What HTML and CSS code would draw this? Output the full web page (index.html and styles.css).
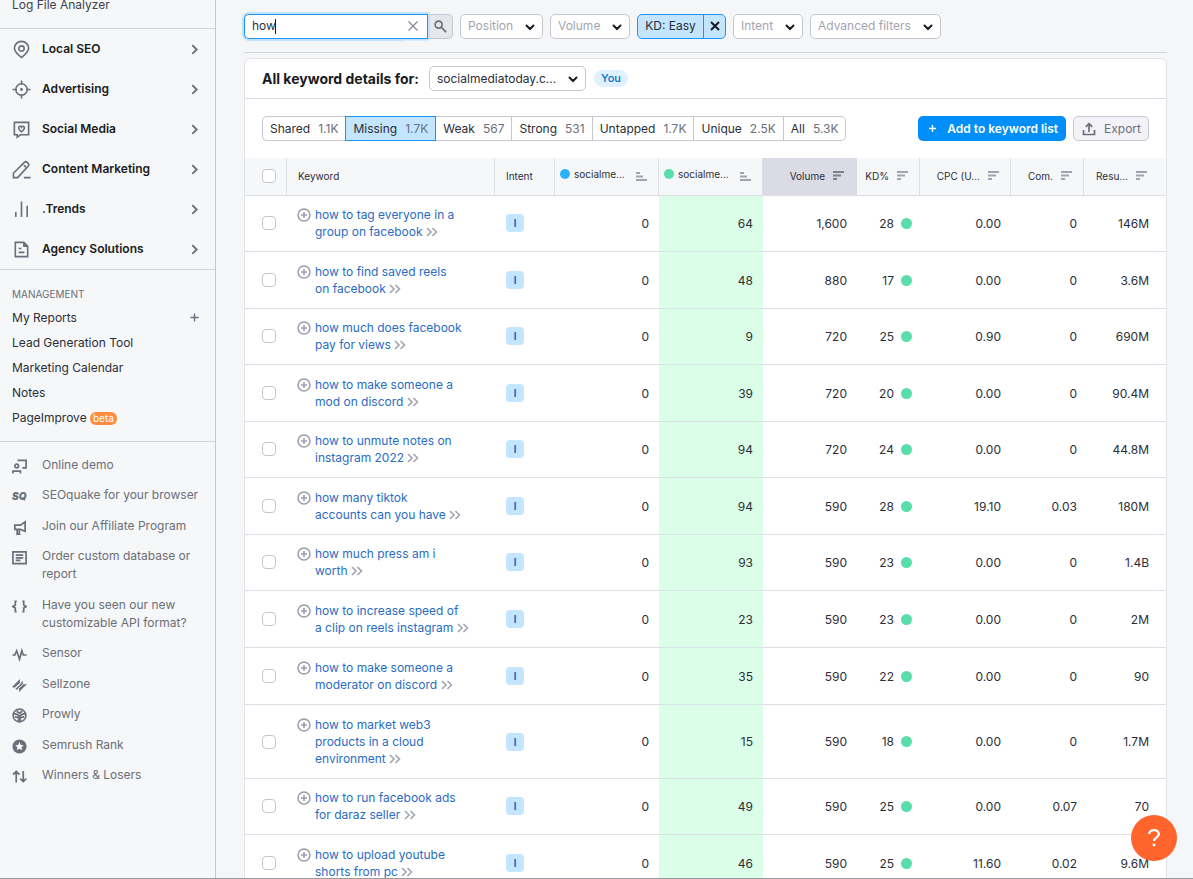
FILE: index.html
```html
<!DOCTYPE html>
<html lang="en">
<head>
<meta charset="utf-8">
<title>Keyword Gap</title>
<link rel="stylesheet" href="styles.css">
</head>
<body>
<svg class="sprite" aria-hidden="true">
  <symbol id="right" viewBox="0 0 8 10"><path d="M2 1l4 4-4 4" fill="none" stroke="currentColor" stroke-width="1.7"/></symbol>
  <symbol id="down" viewBox="0 0 10 7"><path d="M1.500 1.500L5 5l3.500-3.500" fill="none" stroke="currentColor" stroke-width="2" stroke-linecap="round"/></symbol>
  <symbol id="add" viewBox="0 0 14 14"><circle cx="7" cy="7" r="6" fill="none" stroke="currentColor" stroke-width="1.500"/><path d="M7 4v6M4 7h6" stroke="currentColor" stroke-width="1.600"/></symbol>
  <symbol id="more" viewBox="0 0 12 10"><path d="M1 1l4 4-4 4M6.500 1l4 4-4 4" fill="none" stroke="currentColor" stroke-width="1.600"/></symbol>
  <symbol id="desc" viewBox="0 0 11 9"><path d="M0 1h11M0 4.500h8M0 8h4" stroke="currentColor" stroke-width="1.800"/></symbol>
  <symbol id="asc" viewBox="0 0 11 9"><path d="M0 1h4M0 4.500h7M0 8h11" stroke="currentColor" stroke-width="1.800"/></symbol>
</svg>
<div class="app">
<aside class="sidebar">
  <div class="previous"><a href="#">Log File Analyzer</a></div>
  <nav class="sections">
    <a href="#"><svg viewBox="0 0 20 20"><path d="M10 18.500C5.500 15 2.500 12 2.500 8.500a7.500 7 0 0 1 15 0C17.500 12 14.500 15 10 18.500z"/><circle cx="10" cy="9" r="2.800"/></svg><span>Local SEO</span><svg class="arrow"><use href="#right"/></svg></a>
    <a href="#"><svg viewBox="0 0 20 20"><circle cx="10" cy="10" r="6"/><path d="M10 .5V5M10 15v4.500M.5 10H5M15 10h4.500"/><circle class="solid" cx="10" cy="10" r="1.500"/></svg><span>Advertising</span><svg class="arrow"><use href="#right"/></svg></a>
    <a href="#"><svg viewBox="0 0 20 20"><path d="M2.500 2.500h15v13H9L5.500 18v-2.500h-3z"/><path d="M10 12.500C8 11 7 9.700 7 8.300c0-2 2.300-2.300 3-.8.7-1.500 3-1.200 3 .8 0 1.400-1 2.700-3 4.200z"/></svg><span>Social Media</span><svg class="arrow"><use href="#right"/></svg></a>
    <a href="#"><svg viewBox="0 0 20 20"><path d="M1.500 18.500V14L13 2.500q1.500-1.500 3 0l1 1q1.500 1.500 0 3L6 18.500zM12.500 5.500l2 2M12.500 18.500h7"/></svg><span>Content Marketing</span><svg class="arrow"><use href="#right"/></svg></a>
    <a href="#"><svg viewBox="0 0 20 20"><path d="M4 12.500V18M10 1.500V18M16 6v12"/></svg><span>.Trends</span><svg class="arrow"><use href="#right"/></svg></a>
    <a href="#"><svg viewBox="0 0 20 20"><path d="M3.500 2.500h9l4 4v11h-13zM12.500 2.500v4h4M7 9h3M7 13h6"/></svg><span>Agency Solutions</span><svg class="arrow"><use href="#right"/></svg></a>
  </nav>
  <nav class="management">
    <h2>MANAGEMENT</h2>
    <div class="reports"><a href="#">My Reports</a><button type="button" aria-label="Add report"><svg viewBox="0 0 10 10"><path d="M5 .5v9M.5 5h9"/></svg></button></div>
    <a href="#">Lead Generation Tool</a>
    <a href="#">Marketing Calendar</a>
    <a href="#">Notes</a>
    <a href="#">PageImprove <span class="beta">beta</span></a>
  </nav>
  <nav class="links">
    <a href="#"><svg viewBox="0 0 16 16"><path d="M6 1.500h9v8h-4"/><circle cx="5" cy="7.500" r="2"/><path d="M1 15.500V13h8v2.500"/></svg><span>Online demo</span></a>
    <a href="#"><b class="sq">SQ</b><span>SEOquake for your browser</span></a>
    <a href="#"><svg viewBox="0 0 16 16"><path d="M14 2v10L9 10H3V5.500h6zM5.500 10v5H8l-.5-5"/></svg><span>Join our Affiliate Program</span></a>
    <a href="#"><svg viewBox="0 0 16 16"><path d="M1 2h14v12.500H1zM4 5.500h8M4 8.300h8M4 11h5"/></svg><span>Order custom database or report</span></a>
    <a href="#"><svg viewBox="0 0 16 16"><path d="M5 2.500H3.500v4L1 8l2.500 1.500v4H5M11 2.500h1.500v4L15 8l-2.500 1.500v4H11"/></svg><span>Have you seen our new customizable API format?</span></a>
    <a href="#"><svg viewBox="0 0 16 16"><path d="M.5 8.500H3L5 4l3 9 2.500-9L12 8.500h3.500"/></svg><span>Sensor</span></a>
    <a href="#"><svg viewBox="0 0 16 16"><path class="solid" d="M0 9.500L8.500 1v4l-6 5.500zM3 11.500L11.500 3v4L16 6.500 7.500 15v-4l-2 1.500z"/><path class="slit" d="M3 11.500l7-6M6.500 11.500l5-4.500"/></svg><span>Sellzone</span></a>
    <a href="#"><svg viewBox="0 0 16 16"><circle cx="8" cy="8" r="6.800"/><path d="M2 6l4 1 2 2 2-2 4-1M3 9.500l3 .5 2 1.500 2-1.500 3-.5M5 3.500l3 2 3-2M6 13h4"/></svg><span>Prowly</span></a>
    <a href="#"><svg viewBox="0 0 16 16"><circle class="solid" cx="8" cy="8" r="7.500"/><path class="star" d="M8 3.300l1.400 3 3.200.4-2.400 2.200.7 3.200L8 10.500l-2.900 1.600.7-3.200-2.400-2.200 3.200-.4z"/></svg><span>Semrush Rank</span></a>
    <a href="#"><svg viewBox="0 0 16 16"><path d="M4.500 14.500v-12M1 6l3.500-3.500L8 6M12 2v11.500M8.800 10.300l3.200 3.200 3.200-3.200"/></svg><span>Winners &amp; Losers</span></a>
  </nav>
</aside>
<main>
  <form class="filters">
    <div class="search">
      <label class="field"><input type="text" value="how" aria-label="Filter by keyword"><i class="caret"></i></label>
      <button class="clear" type="reset" aria-label="Clear"><svg viewBox="0 0 10 10"><path d="M.5 .5l9 9M9.500 .5l-9 9"/></svg></button>
      <button class="submit" type="button" aria-label="Search"><svg viewBox="0 0 14 14"><circle cx="5" cy="5" r="3.800"/><path d="M8 8l5 5"/></svg></button>
    </div>
    <span class="pick"><select class="w-position" aria-label="Position"><option>Position</option></select><svg><use href="#down"/></svg></span>
    <span class="pick"><select class="w-volume" aria-label="Volume"><option>Volume</option></select><svg><use href="#down"/></svg></span>
    <div class="active-filter"><button type="button">KD: Easy</button><button type="button" aria-label="Remove KD filter"><svg viewBox="0 0 10 10"><path d="M1 1l8 8M9 1L1 9"/></svg></button></div>
    <span class="pick"><select class="w-intent" aria-label="Intent"><option>Intent</option></select><svg><use href="#down"/></svg></span>
    <span class="pick"><select class="w-advanced" aria-label="Advanced filters"><option>Advanced filters</option></select><svg><use href="#down"/></svg></span>
  </form>
  <section class="card">
    <header>
      <label for="domain">All keyword details for:</label>
      <span class="pick dark"><select id="domain" class="w-domain"><option>socialmediatoday.c...</option></select><svg><use href="#down"/></svg></span>
      <span class="you">You</span>
    </header>
    <div class="toolbar">
      <div class="tabs">
        <button type="button">Shared <span>1.1K</span></button>
        <button type="button" class="current">Missing <span>1.7K</span></button>
        <button type="button">Weak <span>567</span></button>
        <button type="button">Strong <span>531</span></button>
        <button type="button">Untapped <span>1.7K</span></button>
        <button type="button">Unique <span>2.5K</span></button>
        <button type="button">All <span>5.3K</span></button>
      </div>
      <button type="button" class="primary"><svg viewBox="0 0 10 10"><path d="M5 1v8M1 5h8"/></svg>Add to keyword list</button>
      <button type="button" class="export"><svg viewBox="0 0 14 14"><path d="M1.500 8v4.500h11V8M7 10V2M3.800 4.800L7 1.600l3.200 3.200"/></svg>Export</button>
    </div>
    <table>
      <colgroup><col class="c-check"><col><col class="c-intent"><col class="c-site"><col class="c-site"><col class="c-volume"><col class="c-kd"><col class="c-cpc"><col class="c-com"><col class="c-results"></colgroup>
      <thead><tr>
        <th><input type="checkbox" aria-label="Select all"></th>
        <th>Keyword</th>
        <th>Intent</th>
        <th class="site"><div><i class="dot blue"></i>socialme...<svg><use href="#asc"/></svg></div></th>
        <th class="site"><div><i class="dot"></i>socialme...<svg><use href="#asc"/></svg></div></th>
        <th class="sorted"><div>Volume<svg><use href="#desc"/></svg></div></th>
        <th><div>KD%<svg><use href="#desc"/></svg></div></th>
        <th><div>CPC (U...<svg><use href="#desc"/></svg></div></th>
        <th><div>Com.<svg><use href="#desc"/></svg></div></th>
        <th class="results"><div>Resu...<svg><use href="#desc"/></svg></div></th>
      </tr></thead>
      <tbody>
        <tr><td><input type="checkbox" aria-label="Select"></td><td><div class="kw"><svg><use href="#add"/></svg><a href="#">how to tag everyone in a<br>group on facebook <svg><use href="#more"/></svg></a></div></td><td><span class="intent">I</span></td><td>0</td><td>64</td><td>1,600</td><td>28<i class="dot"></i></td><td>0.00</td><td>0</td><td>146M</td></tr>
        <tr><td><input type="checkbox" aria-label="Select"></td><td><div class="kw"><svg><use href="#add"/></svg><a href="#">how to find saved reels<br>on facebook <svg><use href="#more"/></svg></a></div></td><td><span class="intent">I</span></td><td>0</td><td>48</td><td>880</td><td>17<i class="dot"></i></td><td>0.00</td><td>0</td><td>3.6M</td></tr>
        <tr><td><input type="checkbox" aria-label="Select"></td><td><div class="kw"><svg><use href="#add"/></svg><a href="#">how much does facebook<br>pay for views <svg><use href="#more"/></svg></a></div></td><td><span class="intent">I</span></td><td>0</td><td>9</td><td>720</td><td>25<i class="dot"></i></td><td>0.90</td><td>0</td><td>690M</td></tr>
        <tr><td><input type="checkbox" aria-label="Select"></td><td><div class="kw"><svg><use href="#add"/></svg><a href="#">how to make someone a<br>mod on discord <svg><use href="#more"/></svg></a></div></td><td><span class="intent">I</span></td><td>0</td><td>39</td><td>720</td><td>20<i class="dot"></i></td><td>0.00</td><td>0</td><td>90.4M</td></tr>
        <tr><td><input type="checkbox" aria-label="Select"></td><td><div class="kw"><svg><use href="#add"/></svg><a href="#">how to unmute notes on<br>instagram 2022 <svg><use href="#more"/></svg></a></div></td><td><span class="intent">I</span></td><td>0</td><td>94</td><td>720</td><td>24<i class="dot"></i></td><td>0.00</td><td>0</td><td>44.8M</td></tr>
        <tr><td><input type="checkbox" aria-label="Select"></td><td><div class="kw"><svg><use href="#add"/></svg><a href="#">how many tiktok<br>accounts can you have <svg><use href="#more"/></svg></a></div></td><td><span class="intent">I</span></td><td>0</td><td>94</td><td>590</td><td>28<i class="dot"></i></td><td>19.10</td><td>0.03</td><td>180M</td></tr>
        <tr><td><input type="checkbox" aria-label="Select"></td><td><div class="kw"><svg><use href="#add"/></svg><a href="#">how much press am i<br>worth <svg><use href="#more"/></svg></a></div></td><td><span class="intent">I</span></td><td>0</td><td>93</td><td>590</td><td>23<i class="dot"></i></td><td>0.00</td><td>0</td><td>1.4B</td></tr>
        <tr><td><input type="checkbox" aria-label="Select"></td><td><div class="kw"><svg><use href="#add"/></svg><a href="#">how to increase speed of<br>a clip on reels instagram <svg><use href="#more"/></svg></a></div></td><td><span class="intent">I</span></td><td>0</td><td>23</td><td>590</td><td>23<i class="dot"></i></td><td>0.00</td><td>0</td><td>2M</td></tr>
        <tr class="tall"><td><input type="checkbox" aria-label="Select"></td><td><div class="kw"><svg><use href="#add"/></svg><a href="#">how to make someone a<br>moderator on discord <svg><use href="#more"/></svg></a></div></td><td><span class="intent">I</span></td><td>0</td><td>35</td><td>590</td><td>22<i class="dot"></i></td><td>0.00</td><td>0</td><td>90</td></tr>
        <tr><td><input type="checkbox" aria-label="Select"></td><td><div class="kw"><svg><use href="#add"/></svg><a href="#">how to market web3<br>products in a cloud<br>environment <svg><use href="#more"/></svg></a></div></td><td><span class="intent">I</span></td><td>0</td><td>15</td><td>590</td><td>18<i class="dot"></i></td><td>0.00</td><td>0</td><td>1.7M</td></tr>
        <tr><td><input type="checkbox" aria-label="Select"></td><td><div class="kw"><svg><use href="#add"/></svg><a href="#">how to run facebook ads<br>for daraz seller <svg><use href="#more"/></svg></a></div></td><td><span class="intent">I</span></td><td>0</td><td>49</td><td>590</td><td>25<i class="dot"></i></td><td>0.00</td><td>0.07</td><td>70</td></tr>
        <tr><td><input type="checkbox" aria-label="Select"></td><td><div class="kw"><svg><use href="#add"/></svg><a href="#">how to upload youtube<br>shorts from pc <svg><use href="#more"/></svg></a></div></td><td><span class="intent">I</span></td><td>0</td><td>46</td><td>590</td><td>25<i class="dot"></i></td><td>11.60</td><td>0.02</td><td>9.6M</td></tr>
      </tbody>
    </table>
  </section>
</main>
</div>
<button type="button" class="help" aria-label="Help"><svg viewBox="0 0 16 22"><path d="M2.500 6.500C2.500 3.500 5 2 8 2s5.500 1.700 5.500 4.700C13.500 10.500 8 10.500 8 14.500"/><circle cx="8" cy="19" r="1.700"/></svg></button>
</body>
</html>
```

FILE: styles.css
```css
* { box-sizing: border-box; }
body { margin: 0; font: 12px/18px Inter, "Liberation Sans", sans-serif; color: #2b2e38; background: #f4f6f8; }
a { color: inherit; text-decoration: none; }
button, input, select { font: inherit; color: inherit; margin: 0; }
button { border: 0; background: none; padding: 0; display: flex; align-items: center; justify-content: center; }
svg { flex: none; fill: none; stroke: currentColor; }
svg use { stroke: none; }
.sprite { display: none; }
.solid { fill: currentColor; stroke: none; }
.app { display: flex; height: 100vh; overflow: hidden; border-bottom: 1px solid #97999f; }

/* Sidebar */
.sidebar { flex: none; width: 216px; border-right: 1px solid #c4c7cf; background: #f5f7f8; }
.previous { padding: 0 12px 18px; line-height: 10px; border-bottom: 1px solid #cfd1dc; color: #40434d; }
.sections { border-bottom: 1px solid #cfd1dc; }
.sections a { display: flex; align-items: center; gap: 11px; height: 40px; padding: 0 16px 0 12px; font-weight: 600; color: #191b23; }
.sections span { flex: 1; }
.sections svg { width: 19px; height: 19px; stroke-width: 1.7; color: #6c6e79; }
.sections .arrow { width: 9px; height: 11px; }
.management { display: flex; flex-direction: column; padding: 15px 16px 11px 12px; border-bottom: 1px solid #cfd1dc; }
.management h2 { margin: 0 0 2px; font-size: 10px; font-weight: 400; line-height: 18px; color: #6c6e79; }
.management a { line-height: 25px; }
.reports { display: flex; justify-content: space-between; }
.reports svg { width: 9px; height: 9px; color: #6c6e79; stroke-width: 1.5; }
.beta { display: inline-block; padding: 0 3px; border-radius: 6px; background: #ff8c43; color: #fff; font-size: 10px; line-height: 13px; }
.links { padding-top: 8px; color: #6c6e79; }
.links a { display: flex; gap: 15px; padding: 6px 12px; }
.links a:nth-child(even) { padding-bottom: 7px; }
.links svg, .sq { flex: none; width: 15px; height: 15px; margin-top: 3px; stroke-width: 1.8; }
.sq { font-size: 10px; line-height: 14px; font-weight: 900; font-style: italic; }
.star { fill: #f5f7f8; stroke: none; }
.slit { stroke: #f5f7f8; stroke-width: 1; }

/* Filters */
main { flex: 1; min-width: 0; padding: 0 26px 0 28px; }
.filters { display: flex; align-items: center; gap: 7px; height: 53px; border-bottom: 1px solid #d1d4db; }
.search { display: flex; height: 25px; }
.field { display: flex; align-items: center; width: 157px; padding-left: 7px; border: 1px solid #1a94f5; border-right: 0; border-radius: 5px 0 0 5px; background: #fff; box-shadow: 0 0 0 2px #c4e2fc; }
.field input { width: 23px; padding: 0; border: 0; outline: 0; background: none; }
.caret { width: 1px; height: 15px; background: #191b23; }
.clear { width: 27px; padding-right: 3px; border: 1px solid #1a94f5; border-left: 0; background: #fff; box-shadow: 0 0 0 2px #c4e2fc; clip-path: inset(-2px -2px -2px 0); color: #8a8e9b; }
.clear svg { width: 10px; height: 10px; stroke-width: 1.4; }
.submit { width: 25px; border: 1px solid #c4c7cf; border-left: 0; border-radius: 0 5px 5px 0; background: #e6e7ed; color: #6c6e79; }
.submit svg { width: 13px; height: 13px; stroke-width: 1.7; }
.pick { position: relative; display: flex; color: #a2a5b1; }
.pick select { height: 25px; padding: 0 7px; border: 1px solid #c4c7cf; border-radius: 5px; background: #fff; appearance: none; }
.pick svg { position: absolute; right: 8px; top: 10px; width: 10px; height: 7px; color: #191b23; pointer-events: none; }
.w-position { width: 83px; }
.w-volume { width: 80px; }
.w-intent { width: 70px; }
.w-advanced { width: 131px; }
.w-domain { width: 157px; }
.active-filter { display: flex; height: 25px; border: 1px solid #1a94f5; border-radius: 5px; background: #c4e5fe; overflow: hidden; }
.active-filter button { width: 65px; }
.active-filter button + button { width: 22px; border-left: 1px solid #1a94f5; color: #191b23; }
.active-filter svg { width: 10px; height: 10px; stroke-width: 2; }

/* Card */
.card { margin-top: 5px; border: 1px solid #e1e3ea; border-radius: 6px 6px 0 0; background: #fff; }
.card header { display: flex; align-items: center; gap: 8px; height: 40px; padding-left: 17px; border-bottom: 1px solid #d9dbe2; }
.card header label { margin-right: 2px; font-size: 14px; font-weight: 700; color: #191b23; }
.dark { color: #2b2e38; }
.you { padding: 0 7px; border-radius: 9px; background: #dff1ff; color: #006dca; font-size: 11px; line-height: 17px; font-weight: 500; }
.toolbar { display: flex; align-items: center; gap: 7px; height: 59px; padding: 0 17px; }
.tabs { display: flex; margin-right: auto; }
.tabs button { gap: 8px; height: 25px; padding: 0 7px; border: 1px solid #c4c7cf; border-left-width: 0; white-space: nowrap; }
.tabs button:first-child { border-left-width: 1px; border-right-width: 0; border-radius: 5px 0 0 5px; }
.tabs button:last-child { border-radius: 0 5px 5px 0; }
.tabs span { color: #6c6e79; }
.tabs .current { padding: 0 7px; border: 1px solid #1a94f5; background: #c4e5fe; }
.primary { gap: 10px; height: 25px; padding: 0 8px 0 10px; border-radius: 5px; background: #008ff8; color: #fff; font-weight: 600; white-space: nowrap; }
.primary svg { width: 9px; height: 9px; stroke-width: 1.6; }
.export { gap: 8px; height: 25px; padding: 0 7px 0 8px; border: 1px solid #c4c7cf; border-radius: 5px; background: #f2f2f7; color: #6c6e79; }
.export svg { width: 14px; height: 14px; stroke-width: 1.7; }

/* Table */
table { width: 100%; table-layout: fixed; border-collapse: separate; border-spacing: 0; }
.c-check { width: 42px; }
.c-intent { width: 60px; }
.c-site { width: 104px; }
.c-volume { width: 94px; }
.c-kd { width: 63px; }
.c-cpc { width: 91px; }
.c-com { width: 73px; }
.c-results { width: 82px; }
th { height: 38px; padding: 0 11px 2px; border-bottom: 1px solid #dddfe7; border-right: 1px solid #dddfe7; background: #f5f7f8; font-size: 10px; font-weight: 400; text-align: left; white-space: nowrap; }
th:last-child, .sorted { border-right: 0; }
th div { display: flex; align-items: center; justify-content: flex-end; gap: 8px; }
th svg { width: 11px; height: 9px; color: #a2a5b1; }
.site { padding: 0 11px 5px 5px; }
.site div { gap: 4px; }
.site svg { margin: 4px 0 0 auto; }
.sorted { padding-right: 13px; background: #dadbe5; }
.sorted svg { color: #7d808c; }
.results { padding-right: 19px; }
td { padding: 10px 10px 11px; border-bottom: 1px solid #dddfe7; text-align: right; line-height: 17px; }
tr:nth-child(even) td, .tall td { padding-top: 11px; }
td:nth-child(1), th:nth-child(1) { padding-left: 17px; text-align: left; }
td:nth-child(2) { padding-right: 16px; text-align: left; }
tr td:nth-child(3) { padding-left: 11px; text-align: left; }
td:nth-child(5) { background: #dbfee8; }
td:nth-child(7) { padding-right: 8px; }
td:nth-child(9) { padding-right: 7px; }
td:nth-child(10) { padding-right: 17px; }
input[type="checkbox"] { display: block; width: 14px; height: 14px; border: 1px solid #c4c7cf; border-radius: 4px; background: #fff; appearance: none; }
.kw { display: flex; gap: 4px; color: #006dca; }
.kw a { color: #2a6cc4; }
.kw > svg { width: 14px; height: 14px; margin-top: 2px; color: #9a9daa; }
.kw a svg { width: 12px; height: 10px; color: #a2a5b1; vertical-align: -1px; }
.intent { display: inline-block; width: 18px; border-radius: 4px; background: #c4e5fe; color: #006dca; font-size: 11px; line-height: 18px; font-weight: 600; text-align: center; }
.dot { display: inline-block; flex: none; width: 10px; height: 10px; border-radius: 50%; background: #59ddaa; }
td .dot { width: 11px; height: 11px; margin-left: 7px; vertical-align: -1px; }
.blue { background: #2bb3ff; }

.help { position: fixed; right: 16px; bottom: 18px; width: 46px; height: 46px; border-radius: 50%; background: #ff642d; color: #fff; }
.help svg { width: 14px; height: 20px; stroke-width: 2.6; }
.help circle { fill: currentColor; stroke: none; }
```
